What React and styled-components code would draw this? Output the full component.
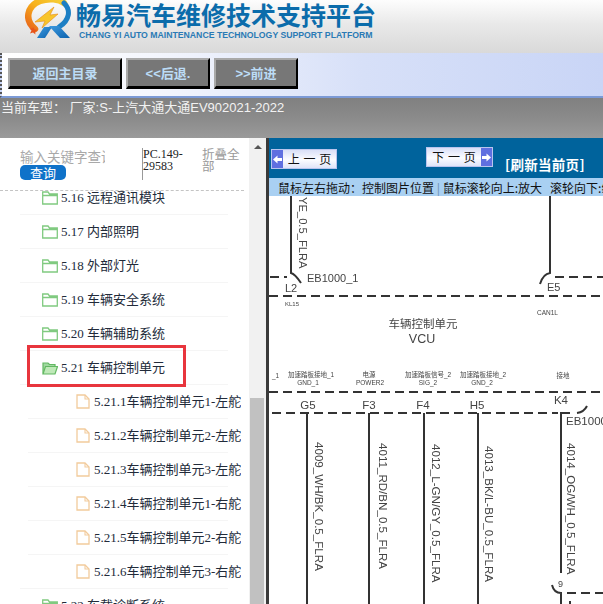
import React from "react";
import styled, { createGlobalStyle } from "styled-components";

const Global = createGlobalStyle`
  html, body { margin: 0; padding: 0; background: #fff; }
  * { box-sizing: border-box; }
`;

const CJK = `"Noto Sans CJK SC", sans-serif`;
const MIXED = `"Liberation Serif", "Noto Sans CJK SC", serif`;
const SANS = `"Liberation Sans", "Noto Sans CJK SC", sans-serif`;

const Page = styled.div`
  width: 603px;
  height: 604px;
  overflow: hidden;
  display: flex;
  flex-direction: column;
  font-family: ${SANS};
`;

const Brand = styled.header`
  height: 53px;
  flex: none;
  display: flex;
  padding-left: 25px;
  overflow: hidden;
  background: linear-gradient(#fdfdfd, #e9e9e9 45%, #d9d9d9);
`;
const BrandText = styled.div`
  margin-left: 5px;
  display: flex;
  flex-direction: column;
`;
const BrandTitle = styled.div`
  font: 700 25px/30px ${CJK};
  color: #0b6cab;
  white-space: nowrap;
  margin-top: -1px;
`;
const BrandSub = styled.div`
  font: 700 8.7px/11px "Liberation Sans", sans-serif;
  color: #2a7ab5;
  white-space: nowrap;
  margin-top: 1px;
  margin-left: 3px;
`;

const NavBar = styled.nav`
  height: 45px;
  flex: none;
  display: flex;
  gap: 4px;
  padding: 5px 0 0 8px;
  border-left: 2px dotted #555;
  border-bottom: 2px solid #7c9ad6;
  background: linear-gradient(90deg, #fff 0%, #f4f6fd 25%, #d7e0f8 60%, #c9d5f6 100%);
`;
const NavButton = styled.div`
  width: ${(p) => p.$w}px;
  height: 31px;
  margin-left: ${(p) => p.$ml || 0}px;
  display: flex;
  align-items: center;
  justify-content: center;
  background: #777;
  border: 2px solid;
  border-color: #a9a9a9 #000 #000 #a9a9a9;
  border-bottom-width: 3px;
  font: 700 13px/1 ${SANS};
  color: #bcdcf6;
`;

const CarBar = styled.div`
  height: 40px;
  flex: none;
  background: linear-gradient(#808080, #8c8c8c 55%, #9a9a9a);
  color: #f2f2f2;
  font: 400 13px/19px ${SANS};
  white-space: nowrap;
  padding-left: 1px;
`;

const Body = styled.div`
  flex: 1;
  min-height: 0;
  display: flex;
`;

const Side = styled.aside`
  width: 249px;
  flex: none;
  display: flex;
  flex-direction: column;
  position: relative;
  background: #fff;
`;

const SearchArea = styled.div`
  height: 53px;
  flex: none;
  width: 244px;
  display: flex;
  border-bottom: 1px dashed #c4c4c4;
  padding: 10px 0 0 20px;
`;
const SearchBox = styled.div`
  width: 122px;
  flex: none;
  display: flex;
  flex-direction: column;
`;
const Placeholder = styled.div`
  width: 85px;
  height: 17px;
  overflow: hidden;
  white-space: nowrap;
  font: 400 13.5px/17px ${CJK};
  color: #a9a9a9;
`;
const SearchButton = styled.div`
  width: 46px;
  height: 15px;
  border-radius: 5px;
  background: #0f72c9;
  color: #fff;
  font: 400 13px/15px ${CJK};
  text-align: center;
`;
const CodeBox = styled.div`
  width: 60px;
  height: 32px;
  border-left: 1px solid #999;
  font: 400 12px/12px "Liberation Serif", serif;
  color: #222;
  flex: none;
  word-break: break-word;
`;
const Collapse = styled.div`
  width: 38px;
  font: 400 12.5px/12px ${CJK};
  color: #9a9a9a;
`;

const Tree = styled.div`
  flex: 1;
  min-height: 0;
  width: 241px;
  overflow: hidden;
  padding-left: 20px;
`;
const TreeList = styled.ul`
  margin: -10px 0 0;
  padding: 0;
  list-style: none;
`;
const Row = styled.li`
  height: 34px;
  display: flex;
  align-items: center;
  white-space: nowrap;
  margin-left: ${(p) => (p.$child && !p.$last ? 8 : 0)}px;
  width: ${(p) => (p.$child && !p.$last ? 200 : 208)}px;
  padding-left: ${(p) => (p.$child ? (p.$last ? 56 : 48) : 22)}px;
  border-bottom: 1px solid #f5f5f5;
  font: 400 13px/1 ${MIXED};
  color: #222b3a;
`;
const RowLabel = styled.span`
  margin-left: ${(p) => (p.$child ? 4 : 3)}px;
`;

const Highlight = styled.div`
  position: absolute;
  left: 27px;
  top: 207px;
  width: 159px;
  height: 42px;
  border: 3px solid #e8353d;
  pointer-events: none;
`;

const ScrollBar = styled.div`
  width: 17px;
  flex: none;
  background: #f1f1f1;
  position: relative;
  display: flex;
  flex-direction: column;
  align-items: center;
`;
const ScrollArrow = styled.div`
  margin-top: 7px;
  width: 0;
  height: 0;
  border-left: 4px solid transparent;
  border-right: 4px solid transparent;
  border-bottom: 4px solid #555;
`;
const ScrollThumb = styled.div`
  position: absolute;
  left: 1px;
  top: 260px;
  bottom: 0;
  width: 14px;
  background: #c1c1c1;
`;

const Viewer = styled.section`
  flex: 1;
  min-width: 0;
  display: flex;
  flex-direction: column;
  border-left: 3px solid #3a3a3a;
  background: #fff;
  overflow: hidden;
`;
const PagerBar = styled.div`
  height: 40px;
  flex: none;
  background: #00639c;
  display: flex;
  align-items: flex-start;
  padding-left: 2px;
`;
const PageButton = styled.div`
  width: ${(p) => p.$w}px;
  height: 20px;
  margin-top: ${(p) => p.$mt}px;
  margin-left: ${(p) => p.$ml}px;
  display: flex;
  flex-direction: ${(p) => (p.$reverse ? "row-reverse" : "row")};
  align-items: stretch;
  background: linear-gradient(#d9dff7, #fbfcff 55%, #dfe4f8);
  border: 1px solid #b9c4ee;
  font: 400 12px/18px ${CJK};
  color: #111;
`;
const ArrowCell = styled.span`
  width: 11px;
  flex: none;
  display: flex;
  align-items: center;
  justify-content: center;
  background: #5f6fe0;
`;
const PageLabel = styled.span`
  flex: 1;
  text-align: center;
  word-spacing: 1px;
  white-space: pre;
`;
const Refresh = styled.div`
  margin-left: 12px;
  margin-top: 17px;
  font: 700 13.5px/18px ${CJK};
  letter-spacing: 0.3px;
  color: #fff;
  white-space: nowrap;
`;
const HintBar = styled.div`
  height: 18px;
  flex: none;
  background: #a9d0f2;
  color: #111;
  font: 400 12px/19px ${CJK};
  white-space: pre;
  padding-left: 9px;
  overflow: hidden;
`;
const HintDivider = styled.span`
  color: #6d8eaa;
`;
const Canvas = styled.div`
  flex: 1;
  min-height: 0;
  overflow: hidden;
  filter: blur(0.3px);
`;
const Drawing = styled.svg`
  display: block;
  width: 334px;
  height: 408px;
`;

const Logo = () => (
  <svg width="46" height="40" viewBox="0 0 46 40" aria-hidden="true">
    <defs>
      <linearGradient id="ring" x1="0" y1="1" x2="1" y2="0">
        <stop offset="0" stopColor="#e8641a" />
        <stop offset="0.5" stopColor="#f7b21c" />
        <stop offset="1" stopColor="#f6d23a" />
      </linearGradient>
      <linearGradient id="rr" x1="0" y1="0" x2="1" y2="1">
        <stop offset="0" stopColor="#3d9ae0" />
        <stop offset="1" stopColor="#0c62ad" />
      </linearGradient>
    </defs>
    <path d="M10 29 C-1 20 2 6 15 1 C24 -2 34 -1 39 3" fill="none" stroke="url(#ring)" strokeWidth="6.5" strokeLinecap="round" />
    <path d="M39 3 C46 10 45 20 34 27" fill="none" stroke="#1c7fc4" strokeWidth="5" strokeLinecap="round" />
    <path d="M10 22 L29 7 L25 15 L33 14 L17 28 L20 21 Z" fill="#f8c52a" stroke="#e68a18" strokeWidth="0.6" />
    <path d="M12 38 L19 27 L27 27 L20 38 Z" fill="url(#rr)" />
    <path d="M24 26 L34 26 L45 38 L35 38 Z" fill="url(#rr)" />
    <path d="M8 27 l1.5 2.5 l3 .5 l-2.5 1.5 l.5 3 l-2.5 -2 l-3 1 l1.5 -3 l-2 -2 l3 0 Z" fill="#e8541a" />
  </svg>
);

const FolderIcon = ({ open }) => (
  <svg width="16" height="14" viewBox="0 0 16 14" aria-hidden="true" style={{ flex: "none" }}>
    {open ? (
      <>
        <path d="M1 12.5 V2 H6 L7.5 3.5 H13 V5.5" fill="#a0d8a0" stroke="#62b862" strokeWidth="1.2" />
        <path d="M1 13 L3.5 5.5 H15.5 L13 13 Z" fill="#bfe9b8" stroke="#62b862" strokeWidth="1.2" />
      </>
    ) : (
      <path d="M.7 13 V1 H6 L7.5 3 H15.3 V13 Z M.7 4.5 H15.3" fill="#fff" stroke="#80ca80" strokeWidth="1.3" />
    )}
  </svg>
);

const FileIcon = () => (
  <svg width="14" height="15" viewBox="0 0 14 15" aria-hidden="true" style={{ flex: "none" }}>
    <path d="M1 1 H9 L13 5 V14 H1 Z" fill="#fff" stroke="#f2cb9c" strokeWidth="1.3" />
    <path d="M9 1 V5 H13" fill="none" stroke="#f2cb9c" strokeWidth="1.1" />
  </svg>
);

const Arrow = ({ left }) => (
  <svg width="9" height="9" viewBox="0 0 9 9" aria-hidden="true">
    <path d={left ? "M0 4.5 L4.5 0.5 V3 H9 V6 H4.5 V8.5 Z" : "M9 4.5 L4.5 0.5 V3 H0 V6 H4.5 V8.5 Z"} fill="#fff" />
  </svg>
);

const parents = [
  "5.16 远程通讯模块",
  "5.17 内部照明",
  "5.18 外部灯光",
  "5.19 车辆安全系统",
  "5.20 车辆辅助系统",
];
const children = [
  "5.21.1车辆控制单元1-左舵",
  "5.21.2车辆控制单元2-左舵",
  "5.21.3车辆控制单元3-左舵",
  "5.21.4车辆控制单元1-右舵",
  "5.21.5车辆控制单元2-右舵",
  "5.21.6车辆控制单元3-右舵",
];

const wires = [
  "M291 196 V273 Q295 274 301 283",
  "M550 196 V273 Q543 274 540 284",
  "M307 413 V604",
  "M369 413 V604",
  "M424 413 V604",
  "M478 413 V604",
  "M570 413 H561 V573",
  "M552 585 Q554 593 561 593 V604",
  "M577 413 Q584 412 587 406",
  "M570 601 V604",
];
const dashes = [
  "M270 277 H287",
  "M555 277 H603",
  "M269 296 H603",
  "M269 392 H603",
  "M272 413 H558",
  "M567 593 H603",
];
const verticalLabels = [
  ["YE_0.5_FLRA", 299, 197, 11.2],
  ["4009_WH/BK_0.5_FLRA", 315, 442, 11.6],
  ["4011_RD/BN_0.5_FLRA", 379, 443, 11.6],
  ["4012_L-GN/GY_0.5_FLRA", 432, 444, 11.6],
  ["4013_BK/L-BU_0.5_FLRA", 485, 446, 11.6],
  ["4014_OG/WH_0.5_FLRA", 567, 443, 11.6],
];
const pinNames = [
  ["加速踏板接地_1", 311, 377, "GND_1", 308],
  ["电源", 369, 377, "POWER2", 370],
  ["加速踏板信号_2", 428, 377, "SIG_2", 428],
  ["加速踏板接地_2", 483, 377, "GND_2", 482],
  ["接地", 563, 378, "", 0],
];
const pins = [
  ["G5", 308, 409],
  ["F3", 369, 409],
  ["F4", 423, 409],
  ["H5", 477, 409],
  ["K4", 561, 404],
];

const Diagram = () => (
  <Drawing viewBox="269 196 334 408">
    <g fill="none" stroke="#333" strokeWidth="2">
      {wires.map((d) => (
        <path key={d} d={d} />
      ))}
    </g>
    <g fill="none" stroke="#333" strokeWidth="1.8" strokeDasharray="9 5">
      {dashes.map((d) => (
        <path key={d} d={d} />
      ))}
    </g>
    <g fontFamily={SANS} fill="#444">
      {verticalLabels.map(([t, x, y, s]) => (
        <text key={t} x={x} y={y} fontSize={s} transform={`rotate(90 ${x} ${y})`}>
          {t}
        </text>
      ))}
      <text x="307" y="282" fontSize="11">EB1000_1</text>
      <text x="285" y="292" fontSize="11">L2</text>
      <text x="547" y="291" fontSize="11">E5</text>
      <text x="285" y="306" fontSize="6">KL15</text>
      <text x="537" y="315" fontSize="6.5">CAN1L</text>
      <text x="423" y="328" fontSize="11.5" textAnchor="middle">车辆控制单元</text>
      <text x="422" y="343" fontSize="12.5" textAnchor="middle">VCU</text>
      <text x="272" y="378" fontSize="6.5">_1</text>
      {pinNames.map(([a, x, y, b, bx]) => (
        <g key={a} fontSize="6.5" textAnchor="middle">
          <text x={x} y={y}>{a}</text>
          {b && <text x={bx} y={y + 8}>{b}</text>}
        </g>
      ))}
      {pins.map(([t, x, y]) => (
        <text key={t} x={x} y={y} fontSize="11.5" textAnchor="middle">{t}</text>
      ))}
      <text x="566" y="425" fontSize="11.5">EB1000</text>
      <text x="558" y="587" fontSize="9">9</text>
    </g>
  </Drawing>
);

export default function App() {
  return (
    <Page>
      <Global />
      <Brand>
        <Logo />
        <BrandText>
          <BrandTitle>畅易汽车维修技术支持平台</BrandTitle>
          <BrandSub>CHANG YI AUTO MAINTENANCE TECHNOLOGY SUPPORT PLATFORM</BrandSub>
        </BrandText>
      </Brand>
      <NavBar>
        <NavButton $w={114} $ml={-2}>返回主目录</NavButton>
        <NavButton $w={84}>&lt;&lt;后退.</NavButton>
        <NavButton $w={84}>&gt;&gt;前进</NavButton>
      </NavBar>
      <CarBar>当前车型： 厂家:S-上汽大通大通EV902021-2022</CarBar>
      <Body>
        <Side>
          <SearchArea>
            <SearchBox>
              <Placeholder>输入关键字查询</Placeholder>
              <SearchButton>查询</SearchButton>
            </SearchBox>
            <CodeBox>PC.149-29583</CodeBox>
            <Collapse>折叠全部</Collapse>
          </SearchArea>
          <Tree>
            <TreeList>
              {parents.map((t) => (
                <Row key={t}>
                  <FolderIcon />
                  <RowLabel>{t}</RowLabel>
                </Row>
              ))}
              <Row>
                <FolderIcon open />
                <RowLabel>5.21 车辆控制单元</RowLabel>
              </Row>
              {children.map((t, i) => (
                <Row key={t} $child $last={i === children.length - 1}>
                  <FileIcon />
                  <RowLabel $child>{t}</RowLabel>
                </Row>
              ))}
              <Row>
                <FolderIcon />
                <RowLabel>5.22 车载诊断系统</RowLabel>
              </Row>
            </TreeList>
          </Tree>
          <Highlight />
        </Side>
        <ScrollBar>
          <ScrollArrow />
          <ScrollThumb />
        </ScrollBar>
        <Viewer>
          <PagerBar>
            <PageButton $w={66} $mt={11} $ml={0}>
              <ArrowCell><Arrow left /></ArrowCell>
              <PageLabel>上 一 页</PageLabel>
            </PageButton>
            <PageButton $w={67} $mt={9} $ml={89} $reverse>
              <ArrowCell><Arrow /></ArrowCell>
              <PageLabel>下 一 页</PageLabel>
            </PageButton>
            <Refresh>[刷新当前页]</Refresh>
          </PagerBar>
          <HintBar>
            鼠标左右拖动：控制图片位置 <HintDivider>|</HintDivider> 鼠标滚轮向上:放大   滚轮向下:缩小
          </HintBar>
          <Canvas>
            <Diagram />
          </Canvas>
        </Viewer>
      </Body>
    </Page>
  );
}
